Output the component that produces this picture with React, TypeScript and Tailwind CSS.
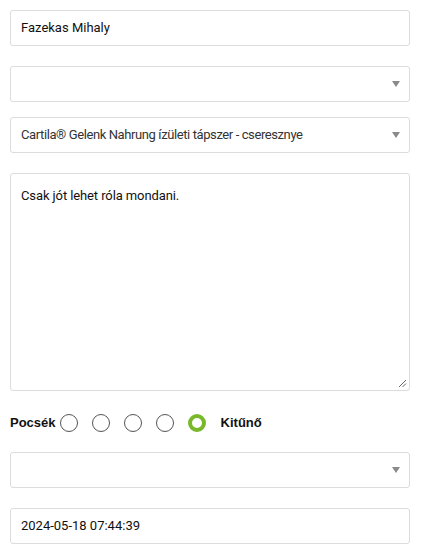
import React from "react";

function Caret() {
  return (
    <svg width="8" height="6" viewBox="0 0 8 6" className="absolute right-[9px] top-1/2 -translate-y-1/2">
      <path d="M0 0 L8 0 L4 6 Z" fill="#8a8a8a" />
    </svg>
  );
}

function Radio({ checked }: { checked?: boolean }) {
  return checked ? (
    <span className="w-[18px] h-[18px] rounded-full border-[4px] border-[#78b82a] bg-white box-border" />
  ) : (
    <span className="w-[18px] h-[18px] rounded-full border border-[#555] bg-white box-border" />
  );
}

export default function App() {
  const box = "h-[36px] w-[400px] border border-[#dcdcdc] rounded-[3px] bg-white flex items-center px-[10px] text-[13px] text-[#111] relative";
  return (
    <div className="bg-white w-[425px] h-[550px] pl-[10px] pt-[10px] font-['Roboto',sans-serif]">
      <div className={box}>Fazekas Mihaly</div>
      <div className={box + " mt-[20px]"}>
        <Caret />
      </div>
      <div className={box + " mt-[15px]"}>
        <span className="text-[#333] tracking-[-0.4px]">Cartila® Gelenk Nahrung ízületi tápszer - cseresznye</span>
        <Caret />
      </div>
      <div className="mt-[20px] h-[218px] w-[400px] border border-[#dcdcdc] rounded-[3px] bg-white px-[10px] pt-[12px] text-[13px] text-[#111] tracking-[-0.1px] relative">
        Csak jót lehet róla mondani.
        <svg width="9" height="9" viewBox="0 0 9 9" className="absolute right-[2px] bottom-[2px]">
          <path d="M8 1 L1 8 M8 4.5 L4.5 8" stroke="#666" strokeWidth="1" />
        </svg>
      </div>
      <div className="mt-[22px] flex items-center h-[20px] text-[13px] font-bold text-[#111] font-['Liberation_Sans',sans-serif]">
        <span>Pocsék</span>
        <div className="flex items-center gap-[14px] ml-[4px]">
          <Radio />
          <Radio />
          <Radio />
          <Radio />
          <Radio checked />
        </div>
        <span className="ml-[15px]">Kitűnő</span>
      </div>
      <div className={box + " mt-[19px]"}>
        <Caret />
      </div>
      <div className={box + " mt-[20px]"}>2024-05-18 07:44:39</div>
    </div>
  );
}
